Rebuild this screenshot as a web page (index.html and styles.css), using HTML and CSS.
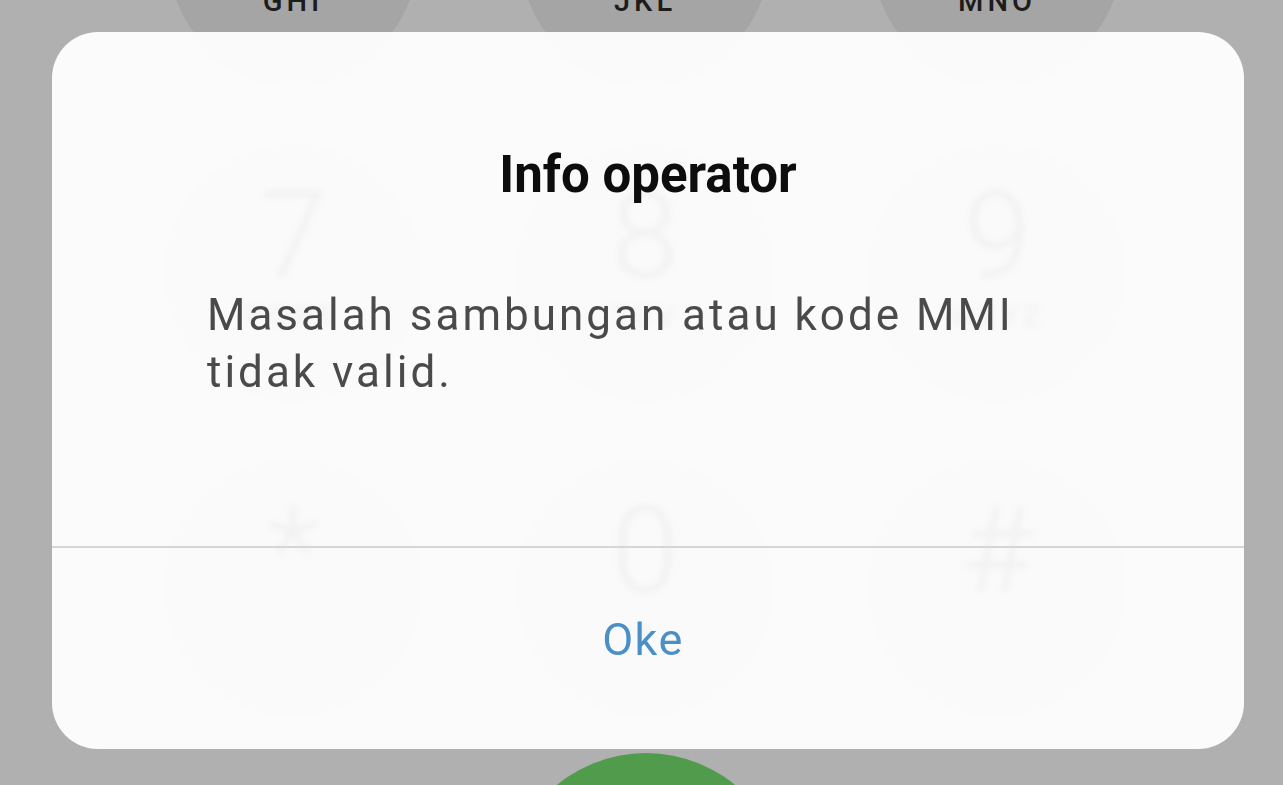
FILE: index.html
```html
<!DOCTYPE html>
<html lang="id">
<head>
<meta charset="utf-8">
<title>Info operator</title>
<link rel="stylesheet" href="styles.css">
</head>
<body>
<div class="screen">
  <div class="keypad" aria-hidden="true">
    <div class="key"><div class="circle"><span class="digit">4</span><span class="letters">GHI</span></div></div>
    <div class="key"><div class="circle"><span class="digit">5</span><span class="letters">JKL</span></div></div>
    <div class="key"><div class="circle"><span class="digit">6</span><span class="letters">MNO</span></div></div>
    <div class="key"><div class="circle"><span class="digit">7</span><span class="letters">PQRS</span></div></div>
    <div class="key"><div class="circle"><span class="digit">8</span><span class="letters">TUV</span></div></div>
    <div class="key"><div class="circle"><span class="digit">9</span><span class="letters">WXYZ</span></div></div>
    <div class="key"><div class="circle"><span class="digit">*</span><span class="letters"></span></div></div>
    <div class="key"><div class="circle"><span class="digit">0</span><span class="letters">+</span></div></div>
    <div class="key"><div class="circle"><span class="digit">#</span><span class="letters"></span></div></div>
  </div>
  <div class="call-row"><div class="call-btn"></div></div>

  <div class="dialog">
    <h1 class="dialog-title">Info operator</h1>
    <div class="dialog-body">
      <p class="dialog-msg">Masalah sambungan atau kode MMI<br>tidak valid.</p>
    </div>
    <div class="dialog-actions">
      <span class="dialog-btn">Oke</span>
    </div>
  </div>
</div>
</body>
</html>
```

FILE: styles.css
```css
* { box-sizing: border-box; }

html, body {
  margin: 0;
  padding: 0;
}

body {
  width: 1283px;
  height: 785px;
  overflow: hidden;
  background: #b0b0b0;
  font-family: Roboto, "Liberation Sans", sans-serif;
}

.screen {
  position: relative;
  width: 1283px;
  height: 785px;
  overflow: hidden;
  background: #b0b0b0;
}

.keypad {
  display: grid;
  grid-template-columns: repeat(3, 352px);
  grid-auto-rows: 315px;
  margin: -200px 0 0 117px;
}

.key {
  display: flex;
  align-items: center;
  justify-content: center;
}

.circle {
  width: 248px;
  height: 248px;
  border-radius: 50%;
  background: #a5a5a5;
  display: flex;
  flex-direction: column;
  align-items: center;
  justify-content: center;
  gap: 15px;
  padding-bottom: 29px;
  color: #1c1c1c;
}

.digit {
  font-size: 120px;
  font-weight: 300;
  line-height: 100px;
  height: 100px;
}

.letters {
  font-size: 29px;
  font-weight: 500;
  letter-spacing: 4px;
  line-height: 30px;
  height: 30px;
}

.call-row {
  display: flex;
  justify-content: center;
  margin-top: 8px;
  padding-left: 8px;
}

.call-btn {
  width: 280px;
  height: 280px;
  border-radius: 50%;
  background: #519b4d;
  flex: none;
}

.dialog {
  position: absolute;
  left: 52px;
  top: 32px;
  width: 1192px;
  height: 717px;
  border-radius: 46px;
  background: rgba(255, 255, 255, 0.94);
  backdrop-filter: blur(3px);
  display: flex;
  flex-direction: column;
  overflow: hidden;
}

.dialog-title {
  margin: 0;
  padding-top: 113px;
  font-size: 51px;
  font-weight: 700;
  line-height: 60px;
  height: 173px;
  text-align: center;
  color: #0d0d0d;
}

.dialog-body {
  flex: 1;
  padding: 82px 0 0 155px;
}

.dialog-msg {
  margin: 0;
  font-size: 44px;
  line-height: 57px;
  letter-spacing: 3px;
  color: #4a4a4a;
}

.dialog-actions {
  flex: 0 0 203px;
  border-top: 2px solid #d6d6d6;
  padding-top: 62px;
  padding-right: 10px;
  display: flex;
  justify-content: center;
}

.dialog-btn {
  font-size: 45px;
  line-height: 60px;
  letter-spacing: 1.5px;
  color: #4b8fc7;
}
```
